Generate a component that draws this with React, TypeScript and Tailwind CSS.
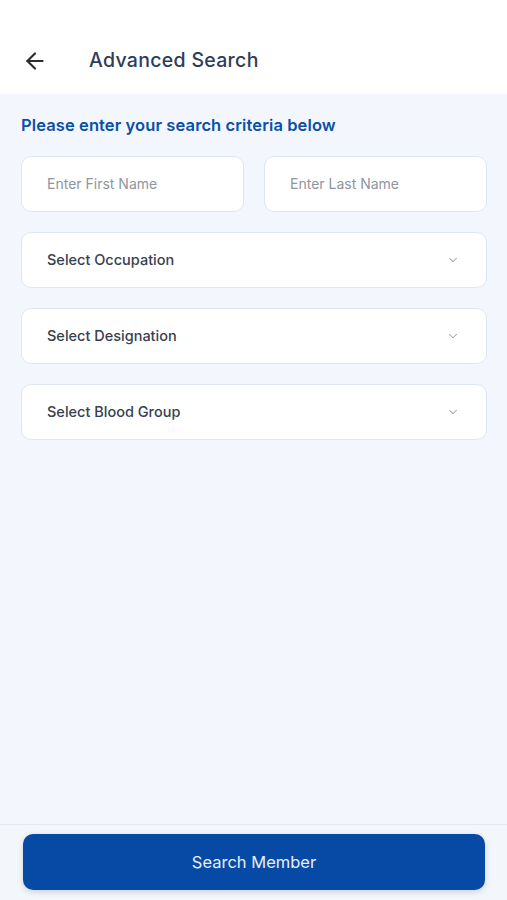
import { ArrowLeft, ChevronDown } from "lucide-react";

const font = { fontFamily: "Inter, 'Noto Sans', sans-serif" };

function TextField({ placeholder }: { placeholder: string }) {
  return (
    <div className="flex h-[56px] flex-1 items-center rounded-[10px] border border-[#dde7f4] bg-white px-[25px]">
      <span className="text-[14px] text-[#8f959e]">{placeholder}</span>
    </div>
  );
}

function SelectField({ label }: { label: string }) {
  return (
    <div className="flex h-[56px] items-center justify-between rounded-[10px] border border-[#dde7f4] bg-white pl-[25px] pr-[26px]">
      <span className="text-[14.5px] font-medium text-[#37404f]">{label}</span>
      <ChevronDown className="h-[14px] w-[14px] text-[#9ea3aa]" strokeWidth={1.8} />
    </div>
  );
}

export default function App() {
  return (
    <div className="flex h-[900px] w-[507px] flex-col bg-[#f3f7fd]" style={font}>
      <header className="flex h-[94px] items-center bg-white pt-[28px]">
        <button className="ml-[22px] text-[#2c2c2c]">
          <ArrowLeft className="h-[26px] w-[26px]" strokeWidth={2} />
        </button>
        <h1 className="ml-[41px] text-[19.5px] font-medium tracking-[0.3px] text-[#2f3d58]">Advanced Search</h1>
      </header>

      <main className="flex-1 pl-[21px] pr-[20px] pt-[19px]">
        <p className="text-[16.5px] font-semibold tracking-[0.1px] text-[#0b4fa6]">Please enter your search criteria below</p>
        <div className="mt-[18px] flex flex-col gap-[20px]">
          <div className="flex gap-[20px]">
            <TextField placeholder="Enter First Name" />
            <TextField placeholder="Enter Last Name" />
          </div>
          <SelectField label="Select Occupation" />
          <SelectField label="Select Designation" />
          <SelectField label="Select Blood Group" />
        </div>
      </main>

      <footer className="h-[76px] border-t border-[#e6eaf0] bg-[#f3f6fb] pl-[23px] pr-[22px] pt-[9px]">
        <button className="flex h-[56px] w-full items-center justify-center rounded-[10px] bg-[#074aa5] text-[16.5px] text-[#e8eefa] shadow-[0_2px_6px_rgba(0,0,0,0.15)]">
          Search Member
        </button>
      </footer>
    </div>
  );
}
